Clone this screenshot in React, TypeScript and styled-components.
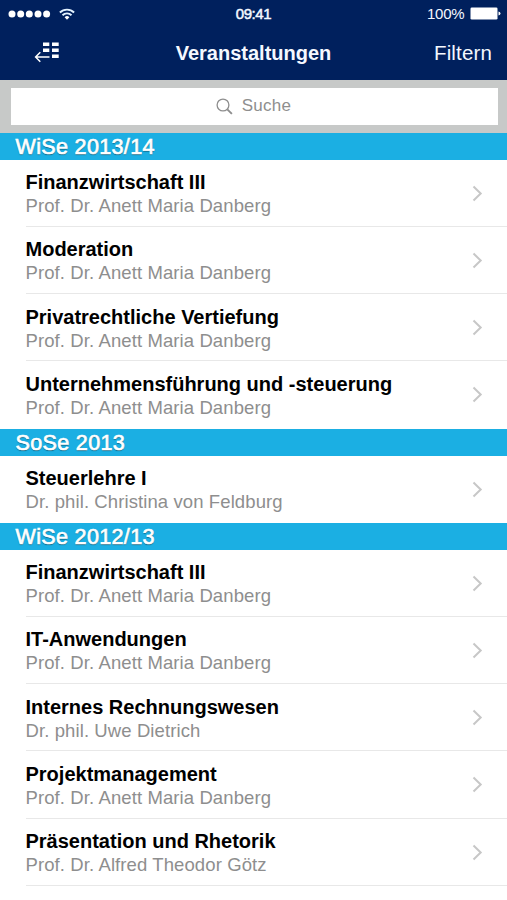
import React from "react";
import styled, { createGlobalStyle } from "styled-components";

const GlobalStyle = createGlobalStyle`
  * { box-sizing: border-box; }
  html, body { margin: 0; padding: 0; background: #fff; }
  body { overflow: hidden; font-family: "Liberation Sans", Arial, sans-serif; }
`;

const Screen = styled.div`
  width: 507px;
  height: 900px;
  overflow: hidden;
  background: #fff;
`;

const Header = styled.header`
  height: 79.5px;
  background: #00205d;
  color: #f4f8ff;
`;

const StatusBar = styled.div`
  height: 27px;
  display: grid;
  grid-template-columns: 1fr auto 1fr;
  align-items: center;
  padding: 0 6.5px;
`;

const Signal = styled.div`
  display: flex;
  align-items: center;
  gap: 8px;
  margin-left: 1.5px;
`;

const Clock = styled.time`
  font-size: 15px;
  line-height: 27px;
  letter-spacing: -0.4px;
  -webkit-text-stroke: 0.5px currentColor;
`;

const Power = styled.div`
  display: flex;
  justify-content: flex-end;
  align-items: center;
  gap: 5px;
  font-size: 15px;
  line-height: 27px;
  letter-spacing: -0.2px;
`;

const NavBar = styled.nav`
  height: 52px;
  display: grid;
  grid-template-columns: 1fr auto 1fr;
  align-items: center;
  padding: 0 15px;
`;

const NavTitle = styled.h1`
  margin: 0;
  font-size: 20px;
  font-weight: 700;
  line-height: 50px;
`;

const TextButton = styled.button`
  border: 0;
  padding: 0;
  background: none;
  color: inherit;
  font: inherit;
  font-size: 20.5px;
  line-height: 50px;
  letter-spacing: 0.15px;
  justify-self: end;
`;

const IconButton = styled(TextButton)`
  display: flex;
  justify-self: start;
  margin: -2px 0 0 19px;
`;

const SearchBar = styled.div`
  height: 53.3px;
  padding: 8px 9.5px 8.3px 10.5px;
  background: #c7c9c8;
`;

const SearchField = styled.div`
  height: 37px;
  display: flex;
  align-items: center;
  justify-content: center;
  gap: 9px;
  padding-right: 1px;
  background: #fff;
  color: #8e8e8e;
  font-size: 17px;
  letter-spacing: 0.25px;
`;

const SectionTitle = styled.h2`
  margin: 0;
  height: 26.9px;
  padding-left: 15.5px;
  background: #1bafe3;
  color: #fff;
  font-size: 21.5px;
  font-weight: 400;
  line-height: 28px;
  letter-spacing: 0.35px;
  -webkit-text-stroke: 0.7px currentColor;
  text-shadow: 0 1px 1px rgba(0, 0, 0, 0.5);
`;

const List = styled.ul`
  list-style: none;
  margin: 0;
  padding: 0;
`;

const Row = styled.li<{ $divided: boolean }>`
  height: 67.25px;
  margin-left: 25.5px;
  padding: 10.5px 24px 0 0;
  display: flex;
  justify-content: space-between;
  border-bottom: ${(p) => (p.$divided ? "1px solid #e8e8e8" : "0")};
`;

const Course = styled.div`
  font-size: 20px;
  font-weight: 700;
  line-height: 24px;
  color: #000;
  white-space: nowrap;
`;

const Lecturer = styled.div`
  font-size: 18.5px;
  line-height: 23.4px;
  letter-spacing: 0.1px;
  color: #8e8e8e;
  white-space: nowrap;
`;

const Chevron = styled.svg`
  margin-top: 14.5px;
  flex: none;
`;

type Item = [course: string, lecturer: string];

const danberg = "Prof. Dr. Anett Maria Danberg";

const semesters: { name: string; items: Item[] }[] = [
  {
    name: "WiSe 2013/14",
    items: [
      ["Finanzwirtschaft III", danberg],
      ["Moderation", danberg],
      ["Privatrechtliche Vertiefung", danberg],
      ["Unternehmensführung und -steuerung", danberg],
    ],
  },
  {
    name: "SoSe 2013",
    items: [["Steuerlehre I", "Dr. phil. Christina von Feldburg"]],
  },
  {
    name: "WiSe 2012/13",
    items: [
      ["Finanzwirtschaft III", danberg],
      ["IT-Anwendungen", danberg],
      ["Internes Rechnungswesen", "Dr. phil. Uwe Dietrich"],
      ["Projektmanagement", danberg],
      ["Präsentation und Rhetorik", "Prof. Dr. Alfred Theodor Götz"],
    ],
  },
];

const SignalDots = () => (
  <svg width="43" height="8" fill="#fff">
    {[4, 12.7, 21.3, 30, 38.6].map((x) => (
      <circle key={x} cx={x} cy="4" r="3.5" />
    ))}
  </svg>
);

const Wifi = () => (
  <svg width="16" height="12" viewBox="0 0 16 12" fill="none" stroke="#e4f3ff" strokeWidth="1.9">
    <path d="M.9 4.5a10.1 10.1 0 0 1 14.2 0" />
    <path d="M3.5 7.2a6.4 6.4 0 0 1 9 0" />
    <path d="M5.6 9.2a3.5 3.5 0 0 1 4.8 0L8 11.7z" fill="#fff" stroke="none" />
  </svg>
);

const Battery = () => (
  <svg width="31" height="13" fill="#fff">
    <rect x=".5" y=".5" width="27" height="12" rx="1.3" />
    <path d="M28.5 4.5q2 .4 2 2t-2 2z" />
  </svg>
);

const BackToMenu = () => (
  <svg width="26" height="21" viewBox="0 0 26 21" fill="#fff">
    <path d="M9 .5h6.3v3.6H9zM18 .5h6.7v3.6H18zM9 6.5h6.3v3.6H9zM18 6.5h6.7v3.6H18zM18 12.5h6.7v3.6H18z" />
    <path d="M15.5 15H1.8M6.3 10.3 1.6 15l4.7 4.7" fill="none" stroke="#fff" strokeWidth="1.5" />
  </svg>
);

const Magnifier = () => (
  <svg width="17" height="17" viewBox="0 0 17 17" fill="none" stroke="#8e8e8e">
    <circle cx="7" cy="7" r="5.9" strokeWidth="1.3" />
    <path d="m11.3 11.3 4.6 4.6" strokeWidth="1.9" />
  </svg>
);

export default function App() {
  return (
    <Screen>
      <GlobalStyle />
      <Header>
        <StatusBar>
          <Signal>
            <SignalDots />
            <Wifi />
          </Signal>
          <Clock>09:41</Clock>
          <Power>
            <span>100%</span>
            <Battery />
          </Power>
        </StatusBar>
        <NavBar>
          <IconButton aria-label="Zurück">
            <BackToMenu />
          </IconButton>
          <NavTitle>Veranstaltungen</NavTitle>
          <TextButton>Filtern</TextButton>
        </NavBar>
      </Header>
      <SearchBar>
        <SearchField>
          <Magnifier />
          <span>Suche</span>
        </SearchField>
      </SearchBar>
      {semesters.map((semester, s) => (
        <section key={semester.name}>
          <SectionTitle>{semester.name}</SectionTitle>
          <List>
            {semester.items.map(([course, lecturer], i) => (
              <Row key={course} $divided={i < semester.items.length - 1 || s === semesters.length - 1}>
                <div>
                  <Course>{course}</Course>
                  <Lecturer>{lecturer}</Lecturer>
                </div>
                <Chevron width="11" height="17" viewBox="0 0 11 17" fill="none" stroke="#c7c7c7" strokeWidth="2">
                  <path d="m1.5 1.5 7.2 7-7.2 7" />
                </Chevron>
              </Row>
            ))}
          </List>
        </section>
      ))}
    </Screen>
  );
}
